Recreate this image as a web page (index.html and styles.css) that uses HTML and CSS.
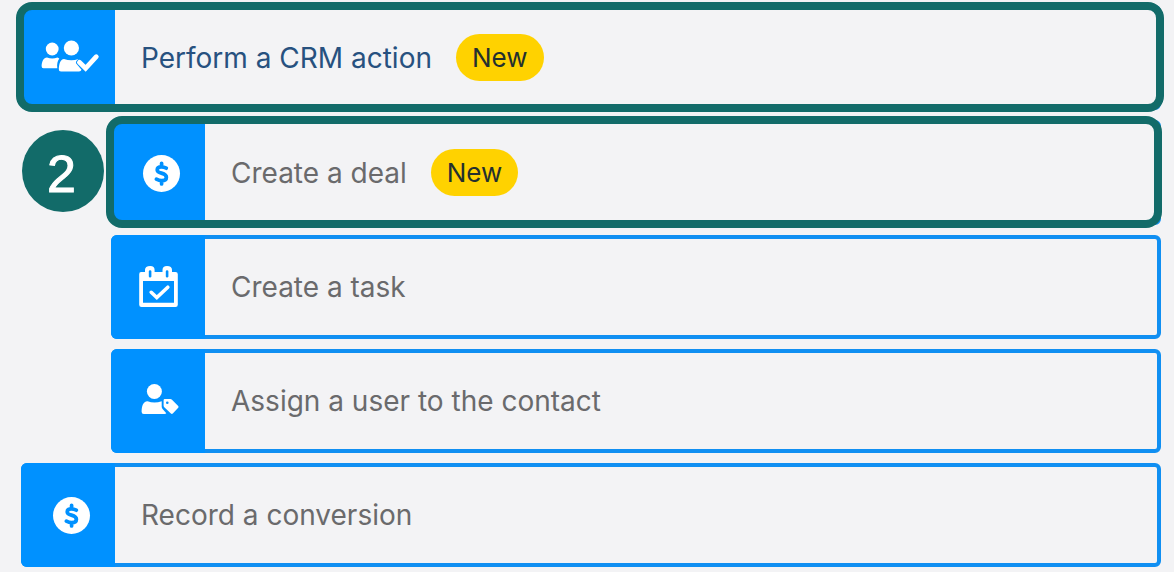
FILE: index.html
```
<!DOCTYPE html>
<html lang="en">
<head>
    <meta charset="UTF-8">
    <meta name="viewport" content="width=device-width, initial-scale=1.0">
    <title>Actions</title>
    <link rel="stylesheet" href="styles.css">
</head>
<body>
    <!-- shared icon shapes -->
    <svg class="sprite" aria-hidden="true">
        <symbol id="icon-dollar" viewBox="0 0 60 48">
            <circle cx="31.5" cy="24.5" r="18.5" fill="#fff"/>
            <path d="M36.3 19.2C34.6 18.3 33 17.9 31.4 17.9C28.9 17.9 27.2 19 27.2 20.9C27.2 25 36.4 23.2 36.4 28.2C36.4 30.4 34.4 31.6 31.7 31.6C29.8 31.6 28 31 26.4 30.1M31.6 14.3V17.5M31.6 31.8V35" fill="none" stroke="#0091ff" stroke-width="3.7" stroke-linecap="round" stroke-linejoin="round"/>
        </symbol>
    </svg>

    <ul class="actions">
        <li>
            <div class="item highlight highlight-main">
                <button type="button" class="action active">
                    <span class="tile">
                        <svg class="icon" viewBox="0 0 60 48" fill="#fff" aria-hidden="true">
                            <circle cx="12.2" cy="15" r="6.4"/>
                            <circle cx="31.4" cy="14" r="7.6"/>
                            <path d="M7 23.6Q12.2 25.4 17.5 23.6L19.3 24.6C17.5 27 16.8 30 17.3 34.3H3.5Q1.5 34.3 1.6 32C1.9 27.5 3.5 23.6 7 23.6Z"/>
                            <path d="M24 24.9Q31.4 27.6 38.5 24.9Q35 27.4 36.2 29.6L41.5 35.8Q41 37.5 39 37.5H21Q18.7 37.5 18.8 35C19 30 20.3 25.2 24 24.9Z"/>
                            <path d="M39.4 28.3L45.6 34.3L56.3 22.7" fill="none" stroke="#fff" stroke-width="4.8" stroke-linecap="round"/>
                        </svg>
                    </span>
                    <span class="label">Perform a CRM action</span>
                    <span class="badge">New</span>
                </button>
            </div>
            <ul class="sub-actions">
                <li class="item highlight highlight-sub">
                    <span class="step">2</span>
                    <button type="button" class="action">
                        <span class="tile">
                            <svg class="icon" aria-hidden="true"><use href="#icon-dollar"/></svg>
                        </span>
                        <span class="label">Create a deal</span>
                        <span class="badge">New</span>
                    </button>
                </li>
                <li class="item">
                    <button type="button" class="action">
                        <span class="tile">
                            <svg class="icon" viewBox="0 0 60 48" aria-hidden="true">
                                <path fill="#fff" fill-rule="evenodd" d="M11 9H15V7Q15 3 20.3 3Q24.6 3 24.6 7V9H32.5V7Q32.5 3 37 3Q42 3 42 7V9H45.5Q47.8 9 47.8 11.3V41.7Q47.8 44 45.5 44H11.5Q9.2 44 9.2 41.7V11.3Q9.2 9 11 9ZM13 18V39.8H44V18ZM18.8 8.2V13.4Q18.8 14.4 20.1 14.4Q21.4 14.4 21.4 13.4V8.2Q21.4 7.2 20.1 7.2Q18.8 7.2 18.8 8.2ZM35.8 8.2V13.4Q35.8 14.4 37.1 14.4Q38.4 14.4 38.4 13.4V8.2Q38.4 7.2 37.1 7.2Q35.8 7.2 35.8 8.2Z"/>
                                <path d="M21.2 29.3L26.8 34.5L37.8 24.2" fill="none" stroke="#fff" stroke-width="3.6" stroke-linecap="round"/>
                            </svg>
                        </span>
                        <span class="label">Create a task</span>
                    </button>
                </li>
                <li class="item">
                    <button type="button" class="action">
                        <span class="tile">
                            <svg class="icon" viewBox="0 0 60 48" fill="#fff" aria-hidden="true">
                                <circle cx="24.4" cy="14.5" r="7.5"/>
                                <path d="M17.5 24.2Q24.4 26.8 31.7 24.2V29.8Q31.7 31.2 32.8 32.3L36.3 36.3Q35.8 37 34.5 37H13.8Q11.6 37 11.6 34.8C11.7 29 13 24.7 17.5 24.2Z"/>
                                <path fill-rule="evenodd" d="M34.7 22H40.3Q41.3 22 42 22.7L48.2 28.9Q49 29.8 48.2 30.7L42.8 36.6Q41.8 37.5 40.9 36.6L34.3 30.2Q33.6 29.5 33.6 28.5V23.2Q33.6 22 34.7 22ZM37.3 24.4A1.3 1.3 0 1 0 37.3 27A1.3 1.3 0 1 0 37.3 24.4Z"/>
                            </svg>
                        </span>
                        <span class="label">Assign a user to the contact</span>
                    </button>
                </li>
            </ul>
        </li>
        <li class="item">
            <button type="button" class="action">
                <span class="tile">
                    <svg class="icon" aria-hidden="true"><use href="#icon-dollar"/></svg>
                </span>
                <span class="label">Record a conversion</span>
            </button>
        </li>
    </ul>
</body>
</html>
```
FILE: styles.css
```
* {
    box-sizing: border-box;
}

body {
    margin: 0;
    padding: 5px 13px 5px 21px;
    background: #f3f3f5;
    font-family: Inter, "Liberation Sans", sans-serif;
}

ul {
    list-style: none;
    margin: 0;
    padding: 0;
}

.sprite {
    position: absolute;
    width: 0;
    height: 0;
}

.actions,
.sub-actions {
    display: flex;
    flex-direction: column;
    gap: 10px;
}

.sub-actions {
    margin-top: 10px;
    padding-left: 90px;
}

.item {
    position: relative;
}

.action {
    display: flex;
    align-items: center;
    width: 100%;
    height: 104px;
    padding: 0;
    border: 4px solid #108ff2;
    border-radius: 6px;
    background: #f3f3f5;
    color: #6a6a6c;
    font-family: inherit;
    font-size: 28px;
    line-height: 36px;
    text-align: left;
    cursor: pointer;
}

.action.active {
    color: #27517f;
}

.highlight .action {
    height: 105px;
}

/* coloured square covers the border on its side */
.tile {
    display: flex;
    align-items: center;
    justify-content: center;
    align-self: stretch;
    flex: none;
    width: 94px;
    margin: -4px 0 -4px -4px;
    padding-left: 4px;
    border-radius: 6px 0 0 6px;
    background: #0091ff;
}

.icon {
    display: block;
    width: 60px;
    height: 48px;
}

.label {
    margin-left: 26px;
}

.badge {
    margin-left: 24px;
    padding: 0 16px;
    border-radius: 24px;
    background: #ffd200;
    color: #24302f;
    font-size: 26px;
    line-height: 47px;
}

/* ring around the selected steps */
.highlight::after {
    content: "";
    position: absolute;
    border: 8px solid #126b69;
    border-radius: 16px;
    pointer-events: none;
}

.highlight-main::after {
    inset: -3px -3px -2px -5px;
}

.highlight-sub::after {
    inset: -4px -1px -3px -5px;
}

.step {
    position: absolute;
    top: 10px;
    left: -89px;
    width: 82px;
    height: 82px;
    padding-right: 3px;
    border-radius: 50%;
    background: #126b69;
    color: #fff;
    font-family: "Liberation Sans", Arial, sans-serif;
    font-size: 52px;
    line-height: 88px;
    text-align: center;
    -webkit-text-stroke: 1px #fff;
}
```
